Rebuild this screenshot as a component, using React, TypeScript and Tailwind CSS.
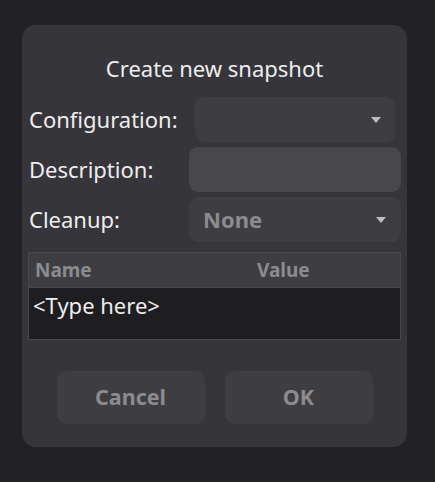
import type { FC } from 'react';

const Arrow: FC = () => (
    <svg width="10" height="6" viewBox="0 0 10 6" className="shrink-0">
        <path d="M0 0 L10 0 L5 6 Z" fill="#bdbdbf" />
    </svg>
)

const rowLabel = "flex items-center h-[45px] text-[22px] text-[#eeeeee]"

export default function App() {
    return (
        <div className="w-[435px] h-[482px] bg-[#222226] pt-[25px] pl-[22px] font-['Noto_Sans',sans-serif]">
            <div className="w-[385px] h-[422px] rounded-[14px] bg-[#36353a] flex flex-col px-[6px]">
                <h1 className="text-center text-[22px] leading-[30px] text-[#eeeeee] pt-[28px] pb-[14px]">
                    Create new snapshot
                </h1>

                <div className="grid grid-cols-[161px_212px] gap-y-[5px]">
                    <div className={rowLabel + " pl-px"}>Configuration:</div>
                    <div className="px-[6px]">
                        <div className="h-[45px] rounded-[9px] bg-[#3e3d42] flex items-center justify-end pr-[14px]">
                            <Arrow />
                        </div>
                    </div>

                    <div className={rowLabel + " pl-px"}>Description:</div>
                    <div className="h-[45px] rounded-[9px] bg-[#48484b]" />

                    <div className={rowLabel + " pl-px"}>Cleanup:</div>
                    <div className="h-[45px] rounded-[9px] bg-[#3e3d42] flex items-center justify-between pl-[14px] pr-[15px]">
                        <span className="text-[22px] font-bold text-[#8c8c8e]">None</span>
                        <Arrow />
                    </div>
                </div>

                <div className="mt-[10px] border border-[#48474c] flex flex-col">
                    <div className="h-[34px] bg-[#3e3d42] flex items-center text-[19px] font-bold text-[#8c8c8e]">
                        <span className="w-[228px] pl-[6px]">Name</span>
                        <span>Value</span>
                    </div>
                    <div className="h-[52px] bg-[#1e1e20] border-t border-[#48474c] pl-[4px] pt-[2px]">
                        <span className="text-[22px] leading-[30px] text-[#eeeeee]">&lt;Type here&gt;</span>
                    </div>
                </div>

                <div className="flex justify-center gap-[20px] mt-[31px]">
                    <button className="w-[148px] h-[53px] rounded-[9px] bg-[#3e3d42] text-[21.5px] font-bold text-[#8c8c8e]">
                        Cancel
                    </button>
                    <button className="w-[148px] h-[53px] rounded-[9px] bg-[#3e3d42] text-[21.5px] font-bold text-[#8c8c8e]">
                        OK
                    </button>
                </div>
            </div>
        </div>
    )
}
